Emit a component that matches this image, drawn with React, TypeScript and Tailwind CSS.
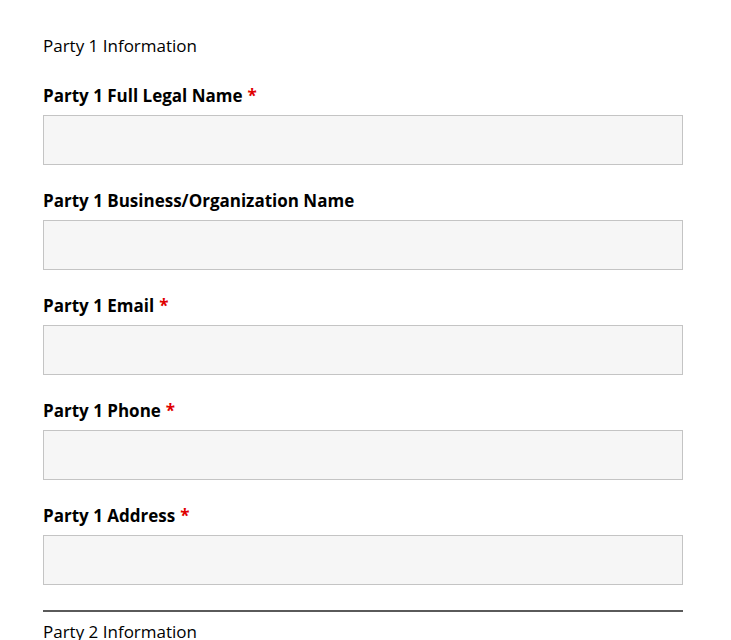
import React from 'react'

type Field = { label: string; required?: boolean }

const fields: Field[] = [
  { label: 'Party 1 Full Legal Name', required: true },
  { label: 'Party 1 Business/Organization Name' },
  { label: 'Party 1 Email', required: true },
  { label: 'Party 1 Phone', required: true },
  { label: 'Party 1 Address', required: true },
]

const App = () => {
  return (
    <div className="min-h-screen bg-white text-black font-['Open_Sans',sans-serif]">
      <div className="w-[640px] ml-[43px] pt-[34px]">
        <h3 className="text-[17px] leading-[24px] font-normal">Party 1 Information</h3>

        <div className="mt-[26px] mb-[25px] flex flex-col gap-[24px]">
          {fields.map((f, i) => (
            <div key={i}>
              <label className="block text-[17px] leading-[24px] font-bold mb-[7px]">
                {f.label}
                {f.required && <span className="text-[#e00000] ml-[5px]">*</span>}
              </label>
              <input
                type="text"
                className="block w-full h-[50px] bg-[#f6f6f6] border border-[#c4c4c4] outline-none px-3"
              />
            </div>
          ))}
        </div>

        <div className="border-t-2 border-[#5a5a5a] pt-[8px]">
          <h3 className="text-[17px] leading-[24px] font-normal">Party 2 Information</h3>
        </div>
      </div>
    </div>
  )
}

export default App
